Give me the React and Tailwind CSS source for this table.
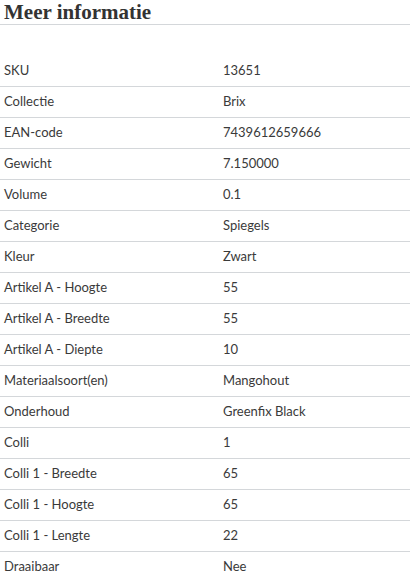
import React from 'react';

const rows = [
  ['SKU', '13651'],
  ['Collectie', 'Brix'],
  ['EAN-code', '7439612659666'],
  ['Gewicht', '7.150000'],
  ['Volume', '0.1'],
  ['Categorie', 'Spiegels'],
  ['Kleur', 'Zwart'],
  ['Artikel A - Hoogte', '55'],
  ['Artikel A - Breedte', '55'],
  ['Artikel A - Diepte', '10'],
  ['Materiaalsoort(en)', 'Mangohout'],
  ['Onderhoud', 'Greenfix Black'],
  ['Colli', '1'],
  ['Colli 1 - Breedte', '65'],
  ['Colli 1 - Hoogte', '65'],
  ['Colli 1 - Lengte', '22'],
  ['Draaibaar', 'Nee'],
];

export default function App() {
  return (
    <div className="w-[410px] bg-white text-[#3a3a3a]">
      <h2
        className="px-1 h-[25px] text-[21px] font-bold leading-[25px] border-b border-[#d4d7da] text-[#333]"
        style={{ fontFamily: '"Liberation Serif", serif' }}
      >
        Meer informatie
      </h2>
      <table className="w-full mt-[30px] text-[13px]" style={{ fontFamily: 'Lato, "Open Sans", sans-serif' }}>
        <tbody>
          {rows.map(([label, value], i) => (
            <tr key={label} className={i < rows.length - 1 ? 'border-b border-[#d4d7da]' : ''}>
              <td className="pl-1 h-[31px] w-[223px] align-middle">{label}</td>
              <td className="align-middle">{value}</td>
            </tr>
          ))}
        </tbody>
      </table>
    </div>
  );
}
